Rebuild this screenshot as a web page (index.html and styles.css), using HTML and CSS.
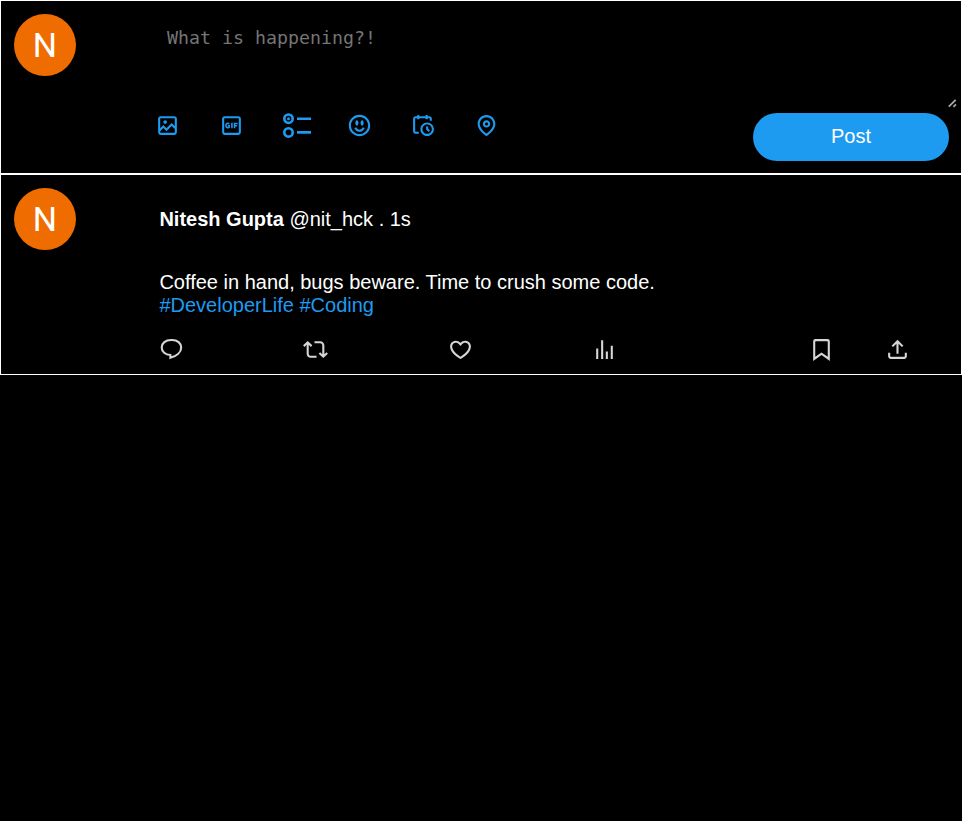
FILE: index.html
```html
<!DOCTYPE html>
<html lang="en">
<head>
<meta charset="utf-8">
<title>Home</title>
<link rel="stylesheet" href="styles.css">
</head>
<body>
<section class="card composer">
  <div class="avatar">N</div>
  <div class="composer-body">
    <div class="field">
      <textarea class="input" placeholder="What is happening?!"></textarea>
      <svg class="grip" viewBox="0 0 9 9"><path d="M.8 7.7L7.7.8M5.4 7.9L7.900 5.4"/></svg>
    </div>
    <div class="toolbar">
      <div class="tools">
        <svg class="icon" viewBox="0 0 24 24"><path d="M3 5.5C3 4.119 4.119 3 5.5 3h13C19.881 3 21 4.119 21 5.5v13c0 1.381-1.119 2.5-2.5 2.5h-13C4.119 21 3 19.881 3 18.5v-13zM5.5 5c-.276 0-.5.224-.5.5v9.086l3-3 3 3 5-5 3 3V5.5c0-.276-.224-.5-.5-.5h-13zM19 15.414l-3-3-5 5-3-3-3 3V18.5c0 .276.224.5.5.5h13c.276 0 .5-.224.5-.5v-3.086zM9.75 7C8.784 7 8 7.784 8 8.75s.784 1.75 1.75 1.75 1.75-.784 1.75-1.75S10.716 7 9.75 7z"/></svg>
        <svg class="icon" viewBox="0 0 24 24"><path d="M3 5.5C3 4.119 4.12 3 5.5 3h13C19.88 3 21 4.119 21 5.5v13c0 1.381-1.12 2.5-2.5 2.5h-13C4.12 21 3 19.881 3 18.5v-13zM5.5 5c-.28 0-.5.224-.5.5v13c0 .276.22.5.5.5h13c.28 0 .5-.224.5-.5v-13c0-.276-.22-.5-.5-.5h-13z"/><path class="line" d="M9.8 10.5C8.6 9.3 6.6 10.1 6.6 12s2 2.8 3.2 1.7v-1.5H8.5M12.4 9.3v5.4M14.9 14.7V10h3M14.9 12.3h2.6"/></svg>
        <svg class="icon icon-poll" viewBox="0 0 30 26"><g class="poll-lines"><circle cx="5.5" cy="5.7" r="4.2"/><circle cx="5.5" cy="19.4" r="4.2"/><path d="M14 5.7h14M14 19.4h14"/></g><circle cx="5.5" cy="5.7" r="1.5"/></svg>
        <svg class="icon" viewBox="0 0 24 24"><path d="M8 9.5C8 8.119 8.672 7 9.5 7S11 8.119 11 9.5 10.328 12 9.5 12 8 10.881 8 9.5zm6.5 2.5c.828 0 1.5-1.119 1.5-2.5S15.328 7 14.5 7 13 8.119 13 9.5s.672 2.5 1.5 2.5zM12 16c-2.224 0-3.021-2.227-3.051-2.316l-1.897.633c.05.15 1.271 3.684 4.949 3.684s4.898-3.533 4.949-3.684l-1.896-.638c-.033.095-.83 2.322-3.053 2.322zm10.25-4.001c0 5.652-4.598 10.25-10.25 10.25S1.75 17.652 1.75 12 6.348 1.75 12 1.75 22.25 6.348 22.25 12zm-2 0c0-4.549-3.701-8.25-8.25-8.25S3.75 7.451 3.75 12s3.701 8.25 8.25 8.25 8.25-3.701 8.25-8.25z"/></svg>
        <svg class="icon" viewBox="0 0 24 24"><path d="M6 3V2h2v1h6V2h2v1h1.5C18.88 3 20 4.119 20 5.5v2h-2v-2c0-.276-.22-.5-.5-.5H16v1h-2V5H8v1H6V5H4.5c-.28 0-.5.224-.5.5v12c0 .276.22.5.5.5h3v2h-3C3.12 20 2 18.881 2 17.5v-12C2 4.119 3.12 3 4.5 3H6zm9.5 8c-2.49 0-4.5 2.015-4.5 4.5s2.01 4.5 4.5 4.5 4.5-2.015 4.5-4.5-2.01-4.5-4.5-4.5zM9 15.5C9 11.91 11.91 9 15.5 9s6.5 2.91 6.5 6.5-2.91 6.5-6.5 6.5S9 19.09 9 15.5zm5.5-2.5h2v2.086l1.71 1.707-1.42 1.414-2.29-2.293V13z"/></svg>
        <svg class="icon icon-pin" viewBox="0 0 24 24"><path d="M12 7c-1.93 0-3.5 1.57-3.5 3.5S10.07 14 12 14s3.5-1.57 3.5-3.5S13.93 7 12 7zm0 5c-.827 0-1.5-.673-1.5-1.5S11.173 9 12 9s1.5.673 1.5 1.5S12.827 12 12 12zm0-10c-4.687 0-8.5 3.813-8.5 8.5 0 5.967 7.621 11.116 7.945 11.332l.555.37.555-.37c.324-.216 7.945-5.365 7.945-11.332C20.5 5.813 16.687 2 12 2zm0 17.77c-1.665-1.241-6.5-5.196-6.5-9.27C5.5 6.916 8.416 4 12 4s6.5 2.916 6.5 6.5c0 4.073-4.835 8.028-6.5 9.27z"/></svg>
      </div>
      <button class="post-button">Post</button>
    </div>
  </div>
</section>
<article class="card tweet">
  <div class="avatar">N</div>
  <div class="tweet-body">
    <div class="author"><b>Nitesh Gupta</b> @nit_hck . 1s</div>
    <p class="text">Coffee in hand, bugs beware. Time to crush some code.<br><span class="tags">#DeveloperLife #Coding</span></p>
    <div class="actions">
      <div class="stats">
        <svg class="icon" viewBox="0 0 24 24"><path class="bubble" d="M12.5 2.900h-1C6.300 2.900 2.600 5.900 2.600 10c0 4.200 3.500 7.100 8.300 7.200v2.800C17 18.400 21.300 14.600 21.300 10.100c0-4.200-3.600-7.200-8.800-7.200z"/></svg>
        <svg class="icon" viewBox="0 0 24 24"><path d="M4.5 3.88l4.432 4.14-1.364 1.46L5.5 7.55V16c0 1.1.896 2 2 2H13v2H7.5c-2.209 0-4-1.79-4-4V7.55L1.432 9.48.068 8.02 4.5 3.88zM16.5 6H11V4h5.5c2.209 0 4 1.79 4 4v8.45l2.068-1.93 1.364 1.46-4.432 4.14-4.432-4.14 1.364-1.46 2.068 1.93V8c0-1.1-.896-2-2-2z"/></svg>
        <svg class="icon" viewBox="0 0 24 24"><path d="M16.697 5.5c-1.222-.06-2.679.51-3.89 2.16l-.805 1.09-.806-1.09C9.984 6.01 8.526 5.44 7.304 5.5c-1.243.07-2.349.78-2.91 1.91-.552 1.12-.633 2.78.479 4.82 1.074 1.97 3.257 4.27 7.129 6.61 3.87-2.34 6.052-4.64 7.126-6.61 1.111-2.04 1.03-3.7.477-4.82-.561-1.13-1.666-1.84-2.908-1.91zm4.187 7.69c-1.351 2.48-4.001 5.12-8.379 7.67l-.503.3-.504-.3c-4.379-2.55-7.029-5.19-8.382-7.67-1.36-2.5-1.41-4.86-.514-6.67.887-1.79 2.647-2.91 4.601-3.01 1.651-.09 3.368.56 4.798 2.01 1.429-1.45 3.146-2.1 4.796-2.01 1.954.1 3.714 1.22 4.601 3.01.896 1.81.846 4.17-.514 6.67z"/></svg>
        <svg class="icon" viewBox="0 0 24 24"><path d="M8.75 21V3h2v18h-2zM18 21V8.5h2V21h-2zM4 21l.004-10h2L6 21H4zm9.248 0v-7h2v7h-2z"/></svg>
      </div>
      <div class="saves">
        <svg class="icon" viewBox="0 0 24 24"><path d="M4 4.5C4 3.12 4.7 2 6 2h12C19.3 2 20 3.12 20 4.5v18.44l-8-5.71-8 5.71V4.5zM6.5 4c-.276 0-.5.22-.5.5v14.56l6-4.29 6 4.29V4.5c0-.28-.224-.5-.5-.5h-11z"/></svg>
        <svg class="icon" viewBox="0 0 24 24"><path d="M12 2.59l5.7 5.7-1.41 1.42L13 6.41V16h-2V6.41l-3.3 3.3-1.41-1.42L12 2.59zM21 15l-.02 3.51c0 1.38-1.12 2.49-2.5 2.49H5.5C4.11 21 3 19.88 3 18.5V15h2v3.5c0 .28.22.5.5.5h12.98c.28 0 .5-.22.5-.5L19 15h2z"/></svg>
      </div>
    </div>
  </div>
</article>
</body>
</html>
```
FILE: styles.css
```css
* {
  box-sizing: border-box;
}

body {
  margin: 0;
  background: #000;
  color: #fff;
  font: 20px/23px "Liberation Sans", Arial, sans-serif;
}

.card {
  display: flex;
  border: 1px solid #fff;
  padding-left: 13px;
}

.composer {
  height: 174px;
}

.tweet {
  height: 201px;
}

.avatar {
  flex: none;
  width: 62px;
  height: 62px;
  margin: 13px 79px 0 0;
  border-radius: 50%;
  background: #ef6c00;
  font: 34px/63px Roboto, sans-serif;
  text-align: center;
}

.composer-body {
  display: flex;
  flex: 1;
  flex-direction: column;
}

.field {
  position: relative;
  height: 108px;
  padding-top: 13px;
}

.input {
  display: block;
  width: 803px;
  height: 95px;
  margin: 0;
  padding: 13px 12px;
  border: 0;
  outline: 0;
  resize: none;
  background: #000;
  color: #fff;
  font: 18.27px/22px "DejaVu Sans Mono", monospace;
}

.input::placeholder {
  color: #757575;
}

.grip {
  position: absolute;
  right: 4px;
  bottom: 1px;
  width: 9px;
  height: 9px;
  fill: none;
  stroke: #a8a8a8;
  stroke-width: 1.8;
}

.toolbar {
  display: flex;
  justify-content: space-between;
  padding: 4px 12px 0 0;
}

.tools {
  display: flex;
  gap: 39px;
  fill: #1d9bf0;
}

.icon {
  display: block;
  flex: none;
  width: 25px;
  height: 25px;
}

.icon-poll {
  width: 30px;
  height: 26px;
  margin-right: -5px;
}

.icon-pin {
  margin-left: -1px;
}

.line,
.poll-lines {
  fill: none;
  stroke: #1d9bf0;
}

.line {
  stroke-width: 1.5;
}

.poll-lines {
  stroke-width: 2.6;
}

.bubble {
  fill: none;
  stroke: #d6d6d6;
  stroke-width: 2;
}

.post-button {
  width: 196px;
  height: 48px;
  padding: 0 0 2px;
  border: 0;
  border-radius: 24px;
  background: #1d9bf0;
  color: #fff;
  font: inherit;
}

.tweet-body {
  flex: 1;
  padding: 33px 51px 0 4.4px;
}

.text {
  margin: 40px 0 20px;
}

.tags {
  color: #1d9bf0;
}

.actions {
  display: flex;
  justify-content: space-between;
  fill: #d6d6d6;
}

.stats {
  display: flex;
  gap: 119.1px;
}

.saves {
  display: flex;
  gap: 51px;
}
```
